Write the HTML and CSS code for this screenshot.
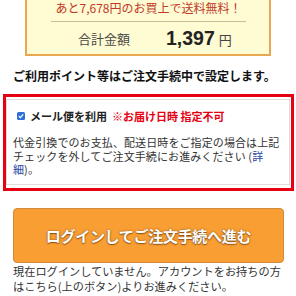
FILE: index.html
```html
<!DOCTYPE html>
<html lang="ja">
<head>
<meta charset="utf-8">
<link rel="stylesheet" href="styles.css">
</head>
<body>
<div class="summary">
  <div class="notice">あと7,678円のお買上で送料無料！</div>
  <div class="total">
    <span class="total-label">合計金額</span>
    <span class="total-value"><span class="num">1,397</span><span class="yen">円</span></span>
  </div>
</div>
<p class="heading">ご利用ポイント等はご注文手続中で設定します。</p>
<div class="mail-box">
  <div class="mail-inner">
    <div class="mail-row">
      <span class="check"><svg width="8" height="8" viewBox="0 0 8 8"><rect x="0" y="0" width="8" height="8" rx="1.5" fill="#2f6fd6"/><path d="M1.8 4.1 L3.3 5.6 L6.2 2.4" stroke="#fff" stroke-width="1.3" fill="none"/></svg></span>
      <span class="mail-label">メール便を利用</span>
      <span class="mail-warn">※お届け日時 指定不可</span>
    </div>
    <p class="mail-text">代金引換でのお支払、配送日時をご指定の場合は上記チェックを外してご注文手続にお進みください (<a class="link" href="#">詳細</a>)。</p>
  </div>
</div>
<div class="btn">ログインしてご注文手続へ進む</div>
<p class="login-note">現在ログインしていません。アカウントをお持ちの方はこちら(上のボタン)よりお進みください。</p>
</body>
</html>
```
FILE: styles.css
```css
html, body {
  margin: 0;
  padding: 0;
  background: #fff;
  font-family: "Noto Sans CJK JP", "Noto Sans", sans-serif;
  color: #222;
  width: 296px;
  overflow: hidden;
}
.summary {
  margin: 0 25px;
  width: 242px;
  background: #fffbd2;
  border: 2px solid #eaa850;
  border-top: none;
}
.notice {
  margin: 0 23px 0 24px;
  text-align: center;
  font-size: 12px;
  line-height: 15px;
  color: #c0392b;
  padding-bottom: 6px;
  border-bottom: 1px solid #c9bc98;
}
.total {
  display: flex;
  align-items: center;
  height: 32px;
  padding-left: 51px;
}
.total-label {
  font-size: 13px;
  color: #4a4a4a;
  width: 88px;
}
.total-value {
  display: flex;
  align-items: baseline;
}
.num {
  font-family: "Liberation Sans", Arial, sans-serif;
  font-weight: bold;
  font-size: 19.5px;
  color: #222;
}
.yen {
  font-size: 13px;
  color: #444;
  margin-left: 4px;
}
.heading {
  margin: 12px 0 10px;
  padding: 0 13px;
  font-size: 12px;
  line-height: 16px;
  font-weight: bold;
  color: #111;
  white-space: nowrap;
}
.mail-box {
  margin: 0 2px 0 3px;
  border: 3px solid #e60012;
  padding: 2px 1px 3px 0;
}
.mail-inner {
  border: 1px solid #dcdcdc;
  padding: 9px 7px 7px 6px;
}
.mail-row {
  display: flex;
  align-items: center;
  height: 14px;
  font-size: 11px;
  font-weight: bold;
}
.check {
  display: flex;
  margin: 0 5px 0 4px;
}
.mail-label {
  color: #222;
  margin-right: 5px;
}
.mail-warn {
  color: #e60012;
}
.mail-text {
  margin: 13px 0 0;
  font-size: 11px;
  letter-spacing: 0.1px;
  line-height: 13.5px;
  color: #333;
}
.link {
  color: #2746a8;
  text-decoration: none;
}
.btn {
  margin: 17px 12px 0 13px;
  height: 53px;
  background: #f89e33;
  border: 1px solid #d28a3c;
  border-radius: 4px;
  display: flex;
  align-items: center;
  justify-content: center;
  color: #fff;
  font-size: 15px;
  font-weight: bold;
  letter-spacing: -0.3px;
  text-shadow: 0 0 2px rgba(80, 40, 0, 0.7), 0 1px 1px rgba(80, 40, 0, 0.5);
}
.login-note {
  margin: 1px 12px 0 13px;
  font-size: 11.2px;
  line-height: 15px;
  color: #333;
}
```
